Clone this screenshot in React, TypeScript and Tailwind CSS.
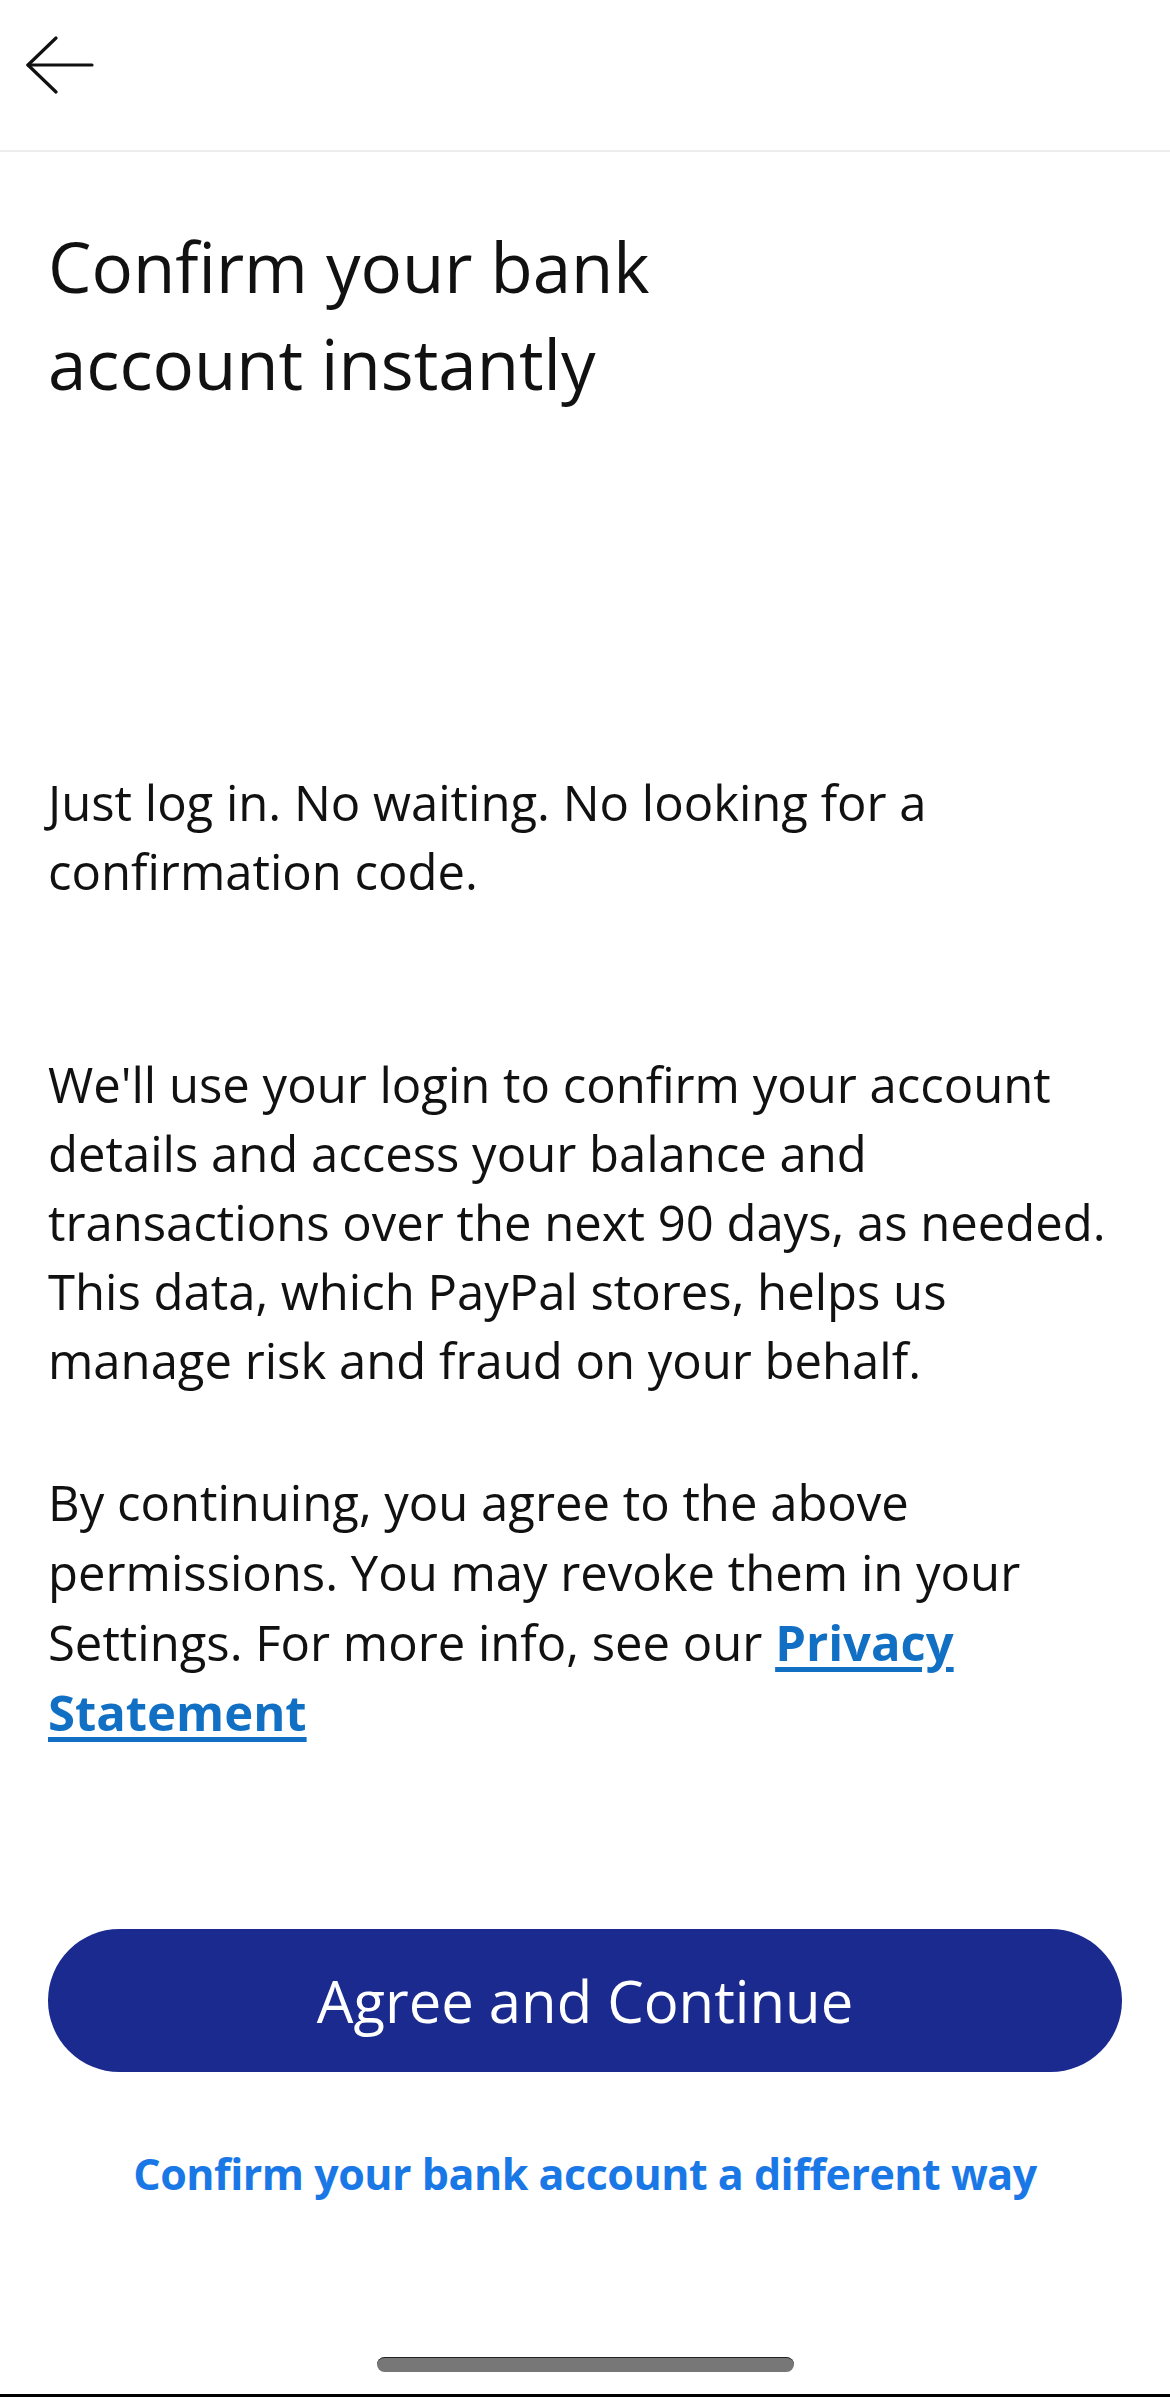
const BackArrow = () => (
    <svg width="68" height="58" viewBox="0 0 68 58" fill="none" stroke="#111" strokeWidth="3.2" strokeLinecap="round" strokeLinejoin="round">
        <path d="M30 2 L2 29 L30 56" />
        <path d="M2 29 H66" />
    </svg>
)

const App = () => {
    return (
        <div className="min-h-[2397px] w-[1170px] bg-white flex flex-col text-[#111] font-['Open_Sans','Lato',sans-serif]">
            {/* top bar */}
            <div className="h-[152px] border-b-2 border-[#eeebed] pl-[26px] pt-[36px] shrink-0">
                <button className="block"><BackArrow /></button>
            </div>

            <div className="flex flex-col px-[48px]">
                <h1 className="mt-[66px] text-[69px] leading-[97px] font-normal">
                    Confirm your bank<br />account instantly
                </h1>

                <p className="mt-[356px] text-[49px] leading-[69px]">
                    Just log in. No waiting. No looking for a confirmation code.
                </p>

                <p className="mt-[144px] text-[49px] leading-[69px]">
                    We'll use your login to confirm your account details and access your balance and transactions over the next 90 days, as needed. This data, which PayPal stores, helps us manage risk and fraud on your behalf.
                </p>

                <p className="mt-[72px] text-[49px] leading-[70px]">
                    By continuing, you agree to the above permissions. You may revoke them in your Settings. For more info, see our{" "}
                    <a href="#" className="font-bold text-[#1170c4] underline decoration-[5px] underline-offset-[6px]">Privacy Statement</a>
                </p>

                <button className="mt-[182px] h-[143px] w-full rounded-full bg-[#1b2a8f] text-white text-[58px] flex items-center justify-center">
                    Agree and Continue
                </button>

                <a href="#" className="mt-[72px] text-center text-[43px] leading-[60px] font-bold text-[#1a78e6] tracking-[-0.5px]">
                    Confirm your bank account a different way
                </a>
            </div>

            <div className="flex-grow" />

            {/* home indicator */}
            <div className="flex justify-center pb-[22px]">
                <div className="h-[15px] w-[417px] rounded-full bg-[#777] border-t border-[#222]" />
            </div>
            <div className="h-[3px] bg-black" />
        </div>
    )
}

export default App
